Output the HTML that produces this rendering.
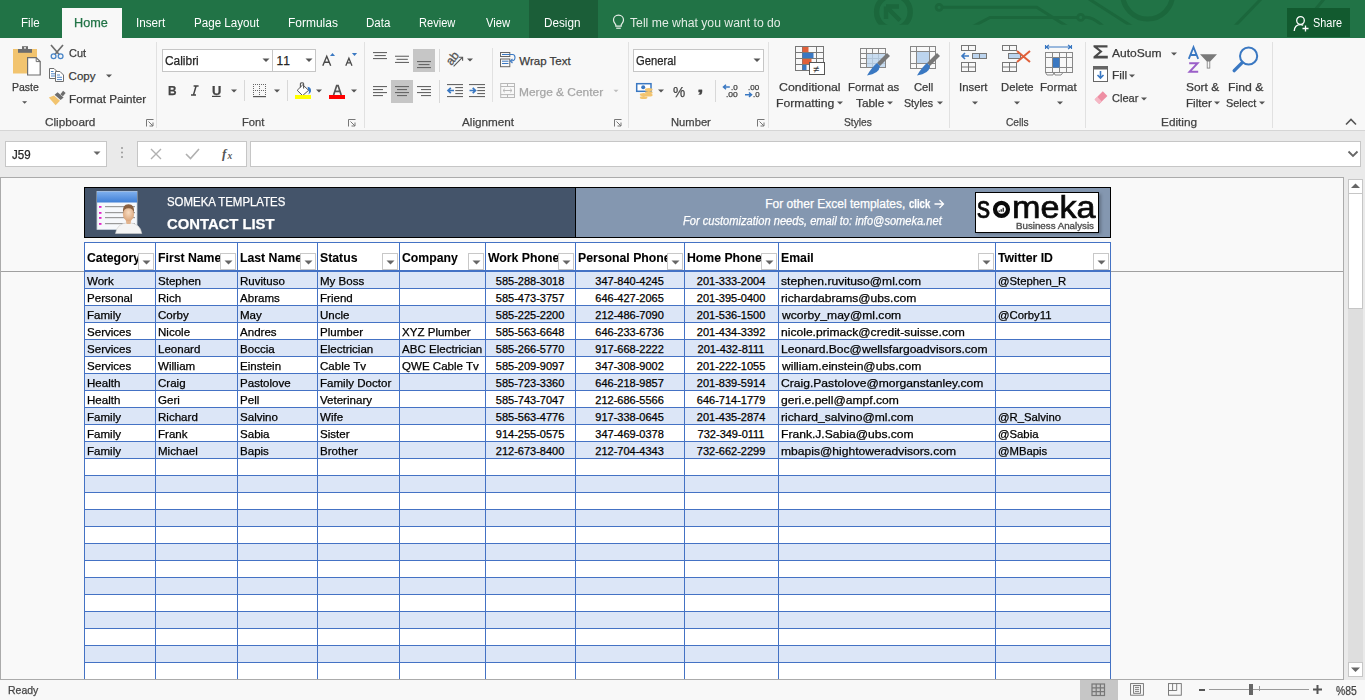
<!DOCTYPE html>
<html><head><meta charset="utf-8"><style>
html,body{margin:0;padding:0;width:1365px;height:700px;overflow:hidden;background:#f9f9f9;}
body{position:relative;font-family:"Liberation Sans",sans-serif;}
.t{position:absolute;line-height:1;white-space:pre;transform-origin:0 0;font-family:"Liberation Sans",sans-serif;-webkit-text-stroke:0.25px currentColor;}
.r{position:absolute;box-sizing:border-box;}
.s{position:absolute;overflow:visible;}
</style></head><body>
<div class="r" style="left:0px;top:0px;width:1365px;height:38px;background:#217346"></div>
<svg class="s" style="left:0px;top:0px;" width="1365" height="38" viewBox="0 0 1365 38">
      <defs><clipPath id="dclip"><rect x="0" y="0" width="1365" height="24.8"/></clipPath></defs>
      <g clip-path="url(#dclip)">
      <g fill="none" stroke="#1b673c" stroke-width="3">
        <path d="M942.5,7.3 L1036.7,7.3 L1068,27"/>
        <path d="M972,27 L990,17.4 L1077.2,17.4"/>
        <path d="M1084.2,17.4 Q1092,16 1104,27"/>
        <path d="M1089,-1 L1132,26.5"/>
        <path d="M1234,27 L1261,-1"/>
        <path d="M1310,16 L1324,-1"/>
      </g>
      <circle cx="893.4" cy="12" r="16.8" fill="none" stroke="#1b673c" stroke-width="5.4"/>
      <circle cx="1147.6" cy="-6" r="25" fill="none" stroke="#1b673c" stroke-width="5"/>
      <path d="M886,6.5 H899 M886,6.5 V19 M886,6.5 L900,20.5" fill="none" stroke="#1b673c" stroke-width="4.4"/>
      <g fill="none" stroke="#1b673c" stroke-width="2.8">
        <circle cx="939.1" cy="7.3" r="3"/>
        <circle cx="1080.7" cy="17.4" r="3"/>
      </g>
      </g>
    </svg>
<div class="r" style="left:62px;top:8px;width:60px;height:30px;background:#f8f8f8"></div>
<div class="r" style="left:529px;top:0px;width:69px;height:38px;background:#1b5e38"></div>
<div class="t" style="left:20.57px;top:17.00px;font-size:12.5px;color:#ffffff;transform:scaleX(0.9276);-webkit-text-stroke:0;">File</div>
<div class="t" style="left:136.16px;top:17.00px;font-size:12.5px;color:#ffffff;transform:scaleX(0.9354);-webkit-text-stroke:0;">Insert</div>
<div class="t" style="left:194.27px;top:17.00px;font-size:12.5px;color:#ffffff;transform:scaleX(0.9279);-webkit-text-stroke:0;">Page Layout</div>
<div class="t" style="left:288.24px;top:17.00px;font-size:12.5px;color:#ffffff;transform:scaleX(0.9578);-webkit-text-stroke:0;">Formulas</div>
<div class="t" style="left:366.18px;top:17.00px;font-size:12.5px;color:#ffffff;transform:scaleX(0.9233);-webkit-text-stroke:0;">Data</div>
<div class="t" style="left:419.31px;top:17.00px;font-size:12.5px;color:#ffffff;transform:scaleX(0.8863);-webkit-text-stroke:0;">Review</div>
<div class="t" style="left:485.80px;top:17.00px;font-size:12.5px;color:#ffffff;transform:scaleX(0.9016);-webkit-text-stroke:0;">View</div>
<div class="t" style="left:544.26px;top:17.00px;font-size:12.5px;color:#ffffff;transform:scaleX(0.9379);-webkit-text-stroke:0;">Design</div>
<div class="t" style="left:74.29px;top:17.00px;font-size:12.5px;color:#217346;transform:scaleX(1.0126);">Home</div>
<div class="t" style="left:630.20px;top:17.00px;font-size:12.5px;color:#e3ece5;transform:scaleX(0.9767);-webkit-text-stroke:0;">Tell me what you want to do</div>
<svg class="s" style="left:612px;top:14px;" width="13" height="16" viewBox="0 0 13 16"><path d="M6.5,1.2 C3.4,1.2 1.5,3.5 1.5,6 C1.5,8.2 3,9.4 3.8,10.8 L3.8,12.2 L9.2,12.2 L9.2,10.8 C10,9.4 11.5,8.2 11.5,6 C11.5,3.5 9.6,1.2 6.5,1.2 Z" fill="none" stroke="#e8efe9" stroke-width="1.2"/>
      <path d="M4.2,14.2 L8.8,14.2" stroke="#e8efe9" stroke-width="1.2"/></svg>
<div class="r" style="left:1287px;top:8px;width:63px;height:29px;background:#125a2f"></div>
<svg class="s" style="left:1293px;top:15px;" width="17" height="17" viewBox="0 0 17 17"><circle cx="7.5" cy="5.5" r="3.8" fill="none" stroke="#fff" stroke-width="1.3"/>
      <path d="M1.2,16 C1.5,11.5 4,9.6 7.5,9.6 C8.5,9.6 9.4,9.8 10.2,10.2" fill="none" stroke="#fff" stroke-width="1.3"/>
      <path d="M12.5,10.5 L12.5,16.5 M9.5,13.5 L15.5,13.5" stroke="#fff" stroke-width="1.3"/></svg>
<div class="t" style="left:1313.20px;top:17.00px;font-size:12.5px;color:#ffffff;transform:scaleX(0.8712);-webkit-text-stroke:0;">Share</div>
<div class="r" style="left:0px;top:38px;width:1365px;height:92px;background:#f8f8f8"></div>
<div class="r" style="left:0px;top:130px;width:1365px;height:1px;background:#d5d5d5"></div>
<div class="r" style="left:156px;top:42px;width:1px;height:86px;background:#e1e1e1"></div>
<div class="r" style="left:364px;top:42px;width:1px;height:86px;background:#e1e1e1"></div>
<div class="r" style="left:628px;top:42px;width:1px;height:86px;background:#e1e1e1"></div>
<div class="r" style="left:768px;top:42px;width:1px;height:86px;background:#e1e1e1"></div>
<div class="r" style="left:949px;top:42px;width:1px;height:86px;background:#e1e1e1"></div>
<div class="r" style="left:1085px;top:42px;width:1px;height:86px;background:#e1e1e1"></div>
<div class="r" style="left:1272px;top:42px;width:1px;height:86px;background:#e1e1e1"></div>
<div class="t" style="left:45.40px;top:117.00px;font-size:11.5px;color:#444444;transform:scaleX(1.0240);">Clipboard</div>
<div class="t" style="left:241.60px;top:117.00px;font-size:11.5px;color:#444444;transform:scaleX(0.9741);">Font</div>
<div class="t" style="left:462.00px;top:117.00px;font-size:11.5px;color:#444444;transform:scaleX(1.0184);">Alignment</div>
<div class="t" style="left:670.70px;top:117.00px;font-size:11.5px;color:#444444;transform:scaleX(0.9739);">Number</div>
<div class="t" style="left:844.30px;top:117.00px;font-size:11.5px;color:#444444;transform:scaleX(0.8902);">Styles</div>
<div class="t" style="left:1005.70px;top:117.00px;font-size:11.5px;color:#444444;transform:scaleX(0.8872);">Cells</div>
<div class="t" style="left:1160.80px;top:117.00px;font-size:11.5px;color:#444444;transform:scaleX(1.0268);">Editing</div>
<svg class="s" style="left:146px;top:119px;" width="8" height="8" viewBox="0 0 8 8"><path d="M0.5,7.5 L0.5,0.5 L7.5,0.5" fill="none" stroke="#777" stroke-width="1"/><path d="M2.5,2.5 L7,7 M7,3.5 L7,7 L3.5,7" fill="none" stroke="#777" stroke-width="1"/></svg>
<svg class="s" style="left:348px;top:119px;" width="8" height="8" viewBox="0 0 8 8"><path d="M0.5,7.5 L0.5,0.5 L7.5,0.5" fill="none" stroke="#777" stroke-width="1"/><path d="M2.5,2.5 L7,7 M7,3.5 L7,7 L3.5,7" fill="none" stroke="#777" stroke-width="1"/></svg>
<svg class="s" style="left:614px;top:119px;" width="8" height="8" viewBox="0 0 8 8"><path d="M0.5,7.5 L0.5,0.5 L7.5,0.5" fill="none" stroke="#777" stroke-width="1"/><path d="M2.5,2.5 L7,7 M7,3.5 L7,7 L3.5,7" fill="none" stroke="#777" stroke-width="1"/></svg>
<svg class="s" style="left:757px;top:119px;" width="8" height="8" viewBox="0 0 8 8"><path d="M0.5,7.5 L0.5,0.5 L7.5,0.5" fill="none" stroke="#777" stroke-width="1"/><path d="M2.5,2.5 L7,7 M7,3.5 L7,7 L3.5,7" fill="none" stroke="#777" stroke-width="1"/></svg>
<svg class="s" style="left:1345px;top:118px;" width="12" height="8" viewBox="0 0 12 8"><path d="M1,6.5 L6,1.5 L11,6.5" fill="none" stroke="#555" stroke-width="1.6"/></svg>
<svg class="s" style="left:0px;top:0px;" width="70" height="110" viewBox="0 0 70 110">
      <rect x="13" y="49" width="24" height="24.5" fill="#f2c46f"/>
      <path d="M18,49 H32 V52.8 H18 Z" fill="#6d6d6d"/>
      <path d="M22,46.2 H28 V49.5 H22 Z" fill="#6d6d6d"/>
      <rect x="24" y="47.2" width="2" height="1.4" fill="#f6f6f6"/>
      <path d="M27.6,57.6 H36.2 L40.2,61.6 V75 H27.6 Z" fill="#ffffff" stroke="#6d6d6d" stroke-width="1.2"/>
      <path d="M36.2,57.6 V61.6 H40.2" fill="none" stroke="#6d6d6d" stroke-width="1"/>
      <path d="M51,45 L60,55.5 M63,45 L54,55.5" stroke="#6d6d6d" stroke-width="1.7"/>
      <circle cx="53.6" cy="56.3" r="2.4" fill="#f6f6f6" stroke="#4a86c8" stroke-width="1.3"/>
      <circle cx="60.6" cy="56.3" r="2.4" fill="#f6f6f6" stroke="#4a86c8" stroke-width="1.3"/>
      <path d="M49.5,68.5 H54 L56.5,71 V78.5 H49.5 Z" fill="#fff" stroke="#6d6d6d" stroke-width="1"/>
      <path d="M51,71.5 H53.5 M51,73.8 H55 M51,76 H55" stroke="#3a78c2" stroke-width="0.9"/>
      <path d="M55.5,71.5 H60 L63.5,75 V81.5 H55.5 Z" fill="#fff" stroke="#6d6d6d" stroke-width="1"/>
      <path d="M57,75 H60 M57,77.3 H62 M57,79.6 H62" stroke="#3a78c2" stroke-width="0.9"/>
      <path d="M60.4,94.2 L63.1,90.8 L65.6,92.9 L62.9,96.3 Z" fill="#6d6d6d"/>
      <path d="M54.6,94.8 L57.6,92.2 L63.6,97.4 L60.6,100 Z" fill="#6d6d6d"/>
      <path d="M48.8,97.6 L54,95.6 L60,100.8 L55.6,105.2 Z" fill="#f2c46f"/>
    </svg>
<div class="t" style="left:12.00px;top:82.00px;font-size:11.5px;color:#3b3b3b;transform:scaleX(0.9134);">Paste</div>
<svg class="s" style="left:20px;top:100px;" width="10" height="5" viewBox="0 0 10 5"><polygon points="2.0999999999999996,1.2 7.1,1.2 4.6,3.7" fill="#555"/></svg>
<div class="t" style="left:68.60px;top:48.00px;font-size:11.5px;color:#3b3b3b;transform:scaleX(0.9518);">Cut</div>
<div class="t" style="left:68.60px;top:71.00px;font-size:11.5px;color:#3b3b3b;">Copy</div>
<svg class="s" style="left:105px;top:74px;" width="8" height="5" viewBox="0 0 8 5"><polygon points="1.0,0.5 7.0,0.5 4,3.5" fill="#555"/></svg>
<div class="t" style="left:68.60px;top:94.00px;font-size:11.5px;color:#3b3b3b;transform:scaleX(1.0154);">Format Painter</div>
<div class="r" style="left:162px;top:49px;width:111px;height:23px;background:#fff;border:1px solid #c6c6c6"></div>
<div class="r" style="left:272px;top:49px;width:44px;height:23px;background:#fff;border:1px solid #c6c6c6"></div>
<div class="t" style="left:165.30px;top:55.00px;font-size:12px;color:#262626;transform:scaleX(0.9927);">Calibri</div>
<div class="t" style="left:276.40px;top:55.00px;font-size:12px;color:#262626;">1</div>
<div class="t" style="left:283.20px;top:55.00px;font-size:12px;color:#262626;">1</div>
<svg class="s" style="left:261px;top:58px;" width="10" height="6" viewBox="0 0 10 6"><polygon points="1.5,0.5 8.5,0.5 5,4.0" fill="#555"/></svg>
<svg class="s" style="left:304px;top:58px;" width="10" height="6" viewBox="0 0 10 6"><polygon points="1.5,0.5 8.5,0.5 5,4.0" fill="#555"/></svg>
<svg class="s" style="left:0px;top:0px;" width="370" height="80" viewBox="0 0 370 80">
      <path d="M322.8,65.7 L326.75,56.3 L330.7,65.7 M324.3,62.3 H329.2" fill="none" stroke="#4a4a4a" stroke-width="1.4"/>
      <polygon points="330,55.9 335,55.9 332.5,52.9" fill="#3a78c2"/>
      <path d="M345.8,65.7 L348.9,58.3 L352,65.7 M347,62.9 H350.8" fill="none" stroke="#4a4a4a" stroke-width="1.3"/>
      <polygon points="351.9,53 357.1,53 354.5,56" fill="#3a78c2"/>
    </svg>
<div class="t" style="left:168.10px;top:84.00px;font-size:13px;color:#444;font-weight:bold;transform:scaleX(0.9111);">B</div>
<svg class="s" style="left:0px;top:0px;" width="370" height="110" viewBox="0 0 370 110">
      <path d="M193.6,86 H198.6 M191,94.9 H196 M196.1,86 L193.5,94.9" fill="none" stroke="#444" stroke-width="1.5"/>
      <rect x="212" y="95.8" width="8.6" height="1.2" fill="#444"/>
      <g fill="#666"><rect x="253" y="84" width="1" height="1"/><rect x="255" y="84" width="1" height="1"/><rect x="257" y="84" width="1" height="1"/><rect x="259" y="84" width="1" height="1"/><rect x="261" y="84" width="1" height="1"/><rect x="263" y="84" width="1" height="1"/><rect x="265" y="84" width="1" height="1"/>
      <rect x="253" y="90" width="1" height="1"/><rect x="255" y="90" width="1" height="1"/><rect x="257" y="90" width="1" height="1"/><rect x="259" y="90" width="1" height="1"/><rect x="261" y="90" width="1" height="1"/><rect x="263" y="90" width="1" height="1"/><rect x="265" y="90" width="1" height="1"/>
      <rect x="253" y="86" width="1" height="1"/><rect x="253" y="88" width="1" height="1"/><rect x="253" y="92" width="1" height="1"/><rect x="253" y="94" width="1" height="1"/>
      <rect x="259" y="86" width="1" height="1"/><rect x="259" y="88" width="1" height="1"/><rect x="259" y="92" width="1" height="1"/><rect x="259" y="94" width="1" height="1"/>
      <rect x="265" y="86" width="1" height="1"/><rect x="265" y="88" width="1" height="1"/><rect x="265" y="92" width="1" height="1"/><rect x="265" y="94" width="1" height="1"/></g>
      <rect x="253" y="96" width="13" height="1.2" fill="#555"/>
      <path d="M297.2,90.3 L302.8,84.8 L308.6,90.3 L302.6,95.6 Z" fill="#fff" stroke="#555" stroke-width="1"/>
      <path d="M300.4,87.4 V83.6 Q300.6,82.8 302,82.8 Q303.5,82.8 303.6,83.8 V88.6" fill="none" stroke="#555" stroke-width="1.1"/>
      <path d="M307.6,86.8 Q311.5,87.5 311,91.6 Q310.4,93.4 308.4,94.4 Q309.6,91 308,89.4 Z" fill="#3a78c2"/>
      <rect x="295" y="95" width="16" height="4" fill="#ffff00"/>
      <path d="M333.6,95 L336.7,85.6 H338.1 L341.2,95 M334.9,91.4 H339.9" fill="none" stroke="#555" stroke-width="1.7"/>
      <rect x="329" y="95" width="16" height="4" fill="#ff0000"/>
    </svg>
<div class="t" style="left:212.00px;top:85.00px;font-size:12px;color:#444;font-weight:bold;transform:scaleX(1.0750);">U</div>
<svg class="s" style="left:230px;top:89px;" width="8" height="5" viewBox="0 0 8 5"><polygon points="1.0,0.5 7.0,0.5 4,3.5" fill="#555"/></svg>
<div class="r" style="left:244px;top:80px;width:1px;height:21px;background:#d8d8d8"></div>
<svg class="s" style="left:273px;top:89px;" width="8" height="5" viewBox="0 0 8 5"><polygon points="1.0,0.5 7.0,0.5 4,3.5" fill="#555"/></svg>
<div class="r" style="left:287px;top:80px;width:1px;height:21px;background:#d8d8d8"></div>
<svg class="s" style="left:315px;top:89px;" width="8" height="5" viewBox="0 0 8 5"><polygon points="1.0,0.5 7.0,0.5 4,3.5" fill="#555"/></svg>
<svg class="s" style="left:350px;top:89px;" width="8" height="5" viewBox="0 0 8 5"><polygon points="1.0,0.5 7.0,0.5 4,3.5" fill="#555"/></svg>
<div class="r" style="left:413px;top:49px;width:22px;height:23px;background:#c6c6c6"></div>
<div class="r" style="left:391px;top:80px;width:22px;height:23px;background:#c6c6c6"></div>
<svg class="s" style="left:0px;top:0px;" width="630" height="110" viewBox="0 0 630 110"><rect x="373" y="52" width="14" height="1.1" fill="#666"/><rect x="374.5" y="55" width="11.300000000000011" height="1.1" fill="#666"/><rect x="373" y="58" width="14" height="1.1" fill="#666"/><rect x="395" y="55.7" width="14" height="1.1" fill="#666"/><rect x="396.5" y="58.8" width="11.300000000000011" height="1.1" fill="#666"/><rect x="395" y="61.9" width="14" height="1.1" fill="#666"/><rect x="417" y="61" width="14" height="1.1" fill="#666"/><rect x="418.5" y="64" width="11.0" height="1.1" fill="#666"/><rect x="417" y="67" width="14" height="1.1" fill="#666"/><rect x="373" y="86" width="14" height="1.1" fill="#666"/><rect x="373" y="89" width="10" height="1.1" fill="#666"/><rect x="373" y="92" width="14" height="1.1" fill="#666"/><rect x="373" y="95" width="10" height="1.1" fill="#666"/><rect x="395" y="86" width="14" height="1.1" fill="#666"/><rect x="397" y="89" width="10" height="1.1" fill="#666"/><rect x="395" y="92" width="14" height="1.1" fill="#666"/><rect x="397" y="95" width="10" height="1.1" fill="#666"/><rect x="417" y="86" width="14" height="1.1" fill="#666"/><rect x="421" y="89" width="10" height="1.1" fill="#666"/><rect x="417" y="92" width="14" height="1.1" fill="#666"/><rect x="421" y="95" width="10" height="1.1" fill="#666"/><rect x="447" y="84" width="16" height="1.1" fill="#666"/><rect x="455.3" y="87" width="7.699999999999989" height="1.1" fill="#666"/><rect x="455.3" y="90" width="7.699999999999989" height="1.1" fill="#666"/><rect x="455.3" y="93" width="7.699999999999989" height="1.1" fill="#666"/><rect x="447" y="96" width="16" height="1.1" fill="#666"/><path d="M448,90.5 H454 M450.8,87.8 L448,90.5 L450.8,93.2" fill="none" stroke="#3a78c2" stroke-width="1.7"/><rect x="469" y="84" width="16" height="1.1" fill="#666"/><rect x="477.3" y="87" width="7.699999999999989" height="1.1" fill="#666"/><rect x="477.3" y="90" width="7.699999999999989" height="1.1" fill="#666"/><rect x="477.3" y="93" width="7.699999999999989" height="1.1" fill="#666"/><rect x="469" y="96" width="16" height="1.1" fill="#666"/><path d="M469.5,90.5 H475.5 M472.7,87.8 L475.5,90.5 L472.7,93.2" fill="none" stroke="#3a78c2" stroke-width="1.7"/><text x="0" y="0" font-family="Liberation Sans" font-size="12" fill="#555" stroke="#555" stroke-width="0.3" transform="translate(451.5,66) rotate(-52)">ab</text><path d="M453.6,66.4 L462.4,57.4" stroke="#555" stroke-width="1.1"/><path d="M459,57.2 H462.6 V60.8" fill="none" stroke="#555" stroke-width="1.1"/><rect x="500.5" y="52.5" width="9.3" height="4" fill="none" stroke="#666" stroke-width="1"/><rect x="500.5" y="59" width="9.3" height="7.7" fill="none" stroke="#666" stroke-width="1"/><path d="M502,54.5 H512.5 Q515,54.5 515,57.5 Q515,61 511,61" fill="none" stroke="#3a78c2" stroke-width="1.1"/><path d="M512.5,59 L510.3,61 L512.5,63" fill="none" stroke="#3a78c2" stroke-width="1.1"/><path d="M502,61.2 H508.5 M502,63.5 H508.5" stroke="#3a78c2" stroke-width="1"/><rect x="500.7" y="83.5" width="13.8" height="14" fill="none" stroke="#b8b8b8" stroke-width="1"/><path d="M500.7,86.5 H514.5 M500.7,94.6 H514.5 M507.5,83.5 V86.5 M507.5,94.6 V97.5" stroke="#b8b8b8" stroke-width="1"/><path d="M503,90.5 H512 M504.8,88.8 L503,90.5 L504.8,92.2 M510.2,88.8 L512,90.5 L510.2,92.2" fill="none" stroke="#b8b8b8" stroke-width="1"/></svg>
<div class="r" style="left:439px;top:49px;width:1px;height:23px;background:#d8d8d8"></div>
<div class="r" style="left:439px;top:80px;width:1px;height:23px;background:#d8d8d8"></div>
<svg class="s" style="left:466px;top:58px;" width="8" height="5" viewBox="0 0 8 5"><polygon points="1.0,0.5 7.0,0.5 4,3.5" fill="#555"/></svg>
<div class="r" style="left:492px;top:48px;width:1px;height:54px;background:#e1e1e1"></div>
<div class="t" style="left:519.30px;top:56.00px;font-size:11.5px;color:#3b3b3b;">Wrap Text</div>
<div class="t" style="left:519.30px;top:87.00px;font-size:11.5px;color:#a6a6a6;transform:scaleX(1.0363);">Merge &amp; Center</div>
<svg class="s" style="left:612px;top:89px;" width="8" height="5" viewBox="0 0 8 5"><polygon points="1.5,0.8 6.5,0.8 4,3.3" fill="#bdbdbd"/></svg>
<div class="r" style="left:633px;top:49px;width:131px;height:23px;background:#fff;border:1px solid #c6c6c6"></div>
<div class="t" style="left:636.40px;top:55.00px;font-size:12px;color:#262626;transform:scaleX(0.9351);">General</div>
<svg class="s" style="left:752px;top:58px;" width="10" height="6" viewBox="0 0 10 6"><polygon points="1.5,0.5 8.5,0.5 5,4.0" fill="#555"/></svg>
<svg class="s" style="left:0px;top:0px;" width="770" height="110" viewBox="0 0 770 110">
      <rect x="636.7" y="83.7" width="14.3" height="7.6" fill="#fff" stroke="#3a78c2" stroke-width="1.5"/>
      <circle cx="643.2" cy="87.3" r="2" fill="#3a78c2"/>
      <ellipse cx="648.8" cy="89.6" rx="3.8" ry="1.5" fill="#f2c46f"/><ellipse cx="648.8" cy="92.4" rx="3.8" ry="1.5" fill="#f2c46f"/><ellipse cx="648.8" cy="95" rx="3.8" ry="1.5" fill="#f2c46f"/>
      <ellipse cx="643.6" cy="94.4" rx="3.8" ry="1.5" fill="#f2c46f"/><ellipse cx="643.6" cy="97.4" rx="3.8" ry="1.5" fill="#f2c46f"/>
      <path d="M723.5,87 H729.8 M726,84.8 L723.5,87 L726,89.2" fill="none" stroke="#3a78c2" stroke-width="1.5"/>
      <path d="M745,94.7 H751.5 M749,92.5 L751.5,94.7 L749,96.9" fill="none" stroke="#3a78c2" stroke-width="1.5"/>
    </svg>
<svg class="s" style="left:657px;top:89px;" width="8" height="5" viewBox="0 0 8 5"><polygon points="1.0,0.5 7.0,0.5 4,3.5" fill="#555"/></svg>
<div class="t" style="left:672.60px;top:85.00px;font-size:14.5px;color:#444;transform:scaleX(0.9462);">%</div>
<div class="t" style="left:697.20px;top:80.00px;font-size:14px;color:#444;font-weight:bold;transform:scaleX(1.7000);">,</div>
<div class="r" style="left:715px;top:80px;width:1px;height:22px;background:#d8d8d8"></div>
<div class="t" style="left:730.70px;top:84.00px;font-size:7.5px;color:#444;transform:scaleX(1.0684);">.0</div>
<div class="t" style="left:725.60px;top:91.00px;font-size:7.5px;color:#444;transform:scaleX(1.1312);">.00</div>
<div class="t" style="left:748.00px;top:84.00px;font-size:7.5px;color:#444;transform:scaleX(1.0727);">.00</div>
<div class="t" style="left:752.60px;top:91.00px;font-size:7.5px;color:#444;transform:scaleX(1.0520);">.0</div>
<svg class="s" style="left:794px;top:45px;" width="32" height="32" viewBox="0 0 32 32"><g fill="none" stroke="#777" stroke-width="1">
      <rect x="1.5" y="1.5" width="28" height="24"/><path d="M1.5,7.5 H29.5 M1.5,13.5 H29.5 M1.5,19.5 H29.5 M8.5,1.5 V25.5 M22.5,1.5 V25.5"/></g>
      <rect x="8.5" y="2" width="6" height="5" fill="#e0603a"/><rect x="8.5" y="8" width="11" height="5" fill="#3a78c2"/>
      <rect x="8.5" y="14" width="9" height="5" fill="#e0603a"/><rect x="8.5" y="20" width="4" height="5" fill="#3a78c2"/>
      <rect x="15.5" y="17.5" width="15" height="12" fill="#fff" stroke="#555" stroke-width="1"/>
      <text x="19" y="27.5" font-family="Liberation Sans" font-size="11" fill="#333">≠</text></svg>
<svg class="s" style="left:859px;top:47px;" width="32" height="30" viewBox="0 0 32 30"><g fill="none" stroke="#888" stroke-width="1">
      <rect x="1.5" y="1.5" width="25" height="19"/><path d="M1.5,6.5 H26.5 M1.5,11.5 H26.5 M1.5,16.5 H26.5 M7.5,1.5 V20.5 M13.5,1.5 V20.5 M19.5,1.5 V20.5"/></g>
      <rect x="8" y="7" width="18" height="13" fill="#bcd4ee" opacity="0.8"/>
      <path d="M28,6 L31,9 L21,19 L18,16 Z" fill="#777"/>
      <path d="M18,16 L21,19 Q20,27 8,28.5 Q13,20 18,16 Z" fill="#3a78c2"/></svg>
<svg class="s" style="left:909px;top:45px;" width="32" height="32" viewBox="0 0 32 32"><g fill="none" stroke="#888" stroke-width="1">
      <rect x="1.5" y="1.5" width="25" height="22"/><path d="M1.5,6.5 H26.5 M1.5,18.5 H26.5 M7.5,1.5 V23.5 M20.5,1.5 V23.5"/></g>
      <rect x="8" y="7" width="12" height="11" fill="#bcd4ee"/>
      <path d="M28,8 L31,11 L21,21 L18,18 Z" fill="#777"/>
      <path d="M18,18 L21,21 Q20,29 8,30.5 Q13,22 18,18 Z" fill="#3a78c2"/></svg>
<div class="t" style="left:778.60px;top:82.00px;font-size:11.5px;color:#3b3b3b;transform:scaleX(1.0705);">Conditional</div>
<div class="t" style="left:775.70px;top:98.00px;font-size:11.5px;color:#3b3b3b;transform:scaleX(1.0611);">Formatting</div>
<div class="t" style="left:847.60px;top:82.00px;font-size:11.5px;color:#3b3b3b;transform:scaleX(0.9882);">Format as</div>
<div class="t" style="left:856.40px;top:98.00px;font-size:11.5px;color:#3b3b3b;transform:scaleX(1.0297);">Table</div>
<div class="t" style="left:913.60px;top:82.00px;font-size:11.5px;color:#3b3b3b;transform:scaleX(0.9763);">Cell</div>
<div class="t" style="left:904.30px;top:98.00px;font-size:11.5px;color:#3b3b3b;transform:scaleX(0.9282);">Styles</div>
<div class="t" style="left:959.41px;top:82.00px;font-size:11.5px;color:#3b3b3b;transform:scaleX(0.9872);">Insert</div>
<div class="t" style="left:1000.70px;top:82.00px;font-size:11.5px;color:#3b3b3b;transform:scaleX(0.9803);">Delete</div>
<div class="t" style="left:1040.40px;top:82.00px;font-size:11.5px;color:#3b3b3b;transform:scaleX(1.0074);">Format</div>
<div class="t" style="left:1186.00px;top:82.00px;font-size:11.5px;color:#3b3b3b;transform:scaleX(1.0376);">Sort &amp;</div>
<div class="t" style="left:1186.00px;top:98.00px;font-size:11.5px;color:#3b3b3b;transform:scaleX(1.0107);">Filter</div>
<div class="t" style="left:1228.00px;top:82.00px;font-size:11.5px;color:#3b3b3b;transform:scaleX(1.0636);">Find &amp;</div>
<div class="t" style="left:1226.00px;top:98.00px;font-size:11.5px;color:#3b3b3b;transform:scaleX(0.9461);">Select</div>
<svg class="s" style="left:835.5px;top:101px;" width="8" height="5" viewBox="0 0 8 5"><polygon points="1.0,0.5 7.0,0.5 4,3.5" fill="#555"/></svg>
<svg class="s" style="left:885.5px;top:101px;" width="8" height="5" viewBox="0 0 8 5"><polygon points="1.0,0.5 7.0,0.5 4,3.5" fill="#555"/></svg>
<svg class="s" style="left:935.5px;top:101px;" width="8" height="5" viewBox="0 0 8 5"><polygon points="1.0,0.5 7.0,0.5 4,3.5" fill="#555"/></svg>
<svg class="s" style="left:970.5px;top:100.5px;" width="8" height="5" viewBox="0 0 8 5"><polygon points="1.0,0.5 7.0,0.5 4,3.5" fill="#555"/></svg>
<svg class="s" style="left:1012.5px;top:100.5px;" width="8" height="5" viewBox="0 0 8 5"><polygon points="1.0,0.5 7.0,0.5 4,3.5" fill="#555"/></svg>
<svg class="s" style="left:1055.5px;top:100.5px;" width="8" height="5" viewBox="0 0 8 5"><polygon points="1.0,0.5 7.0,0.5 4,3.5" fill="#555"/></svg>
<svg class="s" style="left:1213px;top:101px;" width="8" height="5" viewBox="0 0 8 5"><polygon points="1.0,0.5 7.0,0.5 4,3.5" fill="#555"/></svg>
<svg class="s" style="left:1258px;top:101px;" width="8" height="5" viewBox="0 0 8 5"><polygon points="1.0,0.5 7.0,0.5 4,3.5" fill="#555"/></svg>
<svg class="s" style="left:961px;top:45px;" width="28" height="28" viewBox="0 0 28 28"><g fill="none" stroke="#777" stroke-width="1">
      <rect x="0.5" y="0.5" width="14" height="5"/><path d="M7.5,0.5 V5.5"/>
      <rect x="0.5" y="17.5" width="14" height="9"/><path d="M7.5,17.5 V26.5 M0.5,22 H14.5"/></g><rect x="11.5" y="8.5" width="14" height="5" fill="#bcd4ee" stroke="#777"/>
      <path d="M18.5,8.5 V13.5" stroke="#777"/><path d="M1,11 H8 M4,8 L1,11 L4,14" fill="none" stroke="#3a78c2" stroke-width="1.6"/></svg>
<svg class="s" style="left:1002px;top:45px;" width="32" height="28" viewBox="0 0 32 28"><g fill="none" stroke="#777" stroke-width="1">
      <rect x="0.5" y="0.5" width="14" height="5"/><path d="M7.5,0.5 V5.5"/>
      <rect x="0.5" y="17.5" width="14" height="9"/><path d="M7.5,17.5 V26.5 M0.5,22 H14.5"/></g><rect x="6.5" y="8.5" width="12" height="5" fill="#bcd4ee" stroke="#777"/>
      <path d="M15,6 L28,17 M28,6 L15,17" stroke="#e0603a" stroke-width="2"/></svg>
<svg class="s" style="left:1044px;top:44px;" width="30" height="32" viewBox="0 0 30 32"><path d="M1.5,1 V5 M27.5,1 V5 M2,3 H27 M5,1 L2,3 L5,5 M24,1 L27,3 L24,5" fill="none" stroke="#3a78c2" stroke-width="1.1"/>
      <g fill="none" stroke="#888" stroke-width="1"><rect x="1.5" y="8.5" width="27" height="20"/>
      <path d="M1.5,13.5 H28.5 M1.5,23.5 H28.5 M8.5,8.5 V28.5 M15.5,8.5 V28.5 M22.5,8.5 V28.5"/>
      <path d="M1.5,28.5 L3,31 L9,31 L10,28.5 M10,28.5 L11,31 L17,31 L19,28.5"/></g>
      <rect x="9" y="14" width="6.5" height="9.5" fill="#3a78c2"/></svg>
<svg class="s" style="left:0px;top:0px;" width="1280" height="110" viewBox="0 0 1280 110"><path d="M1093.5,45.2 H1107.5 V47.6 H1097.6 L1102.6,51.6 L1097.6,55.8 H1107.8 V58.4 H1093.5 V56.4 L1099.4,51.6 L1093.5,46.9 Z" fill="#4a4a4a"/></svg>
<div class="t" style="left:1112.40px;top:48.00px;font-size:11.5px;color:#3b3b3b;transform:scaleX(1.0487);">AutoSum</div>
<svg class="s" style="left:1170px;top:52px;" width="8" height="5" viewBox="0 0 8 5"><polygon points="1.0,0.5 7.0,0.5 4,3.5" fill="#555"/></svg>
<svg class="s" style="left:1093px;top:66px;" width="16" height="17" viewBox="0 0 16 17"><rect x="0.5" y="0.5" width="14" height="15" fill="#fff" stroke="#666"/><rect x="0.5" y="0.5" width="14" height="3" fill="#666"/>
      <path d="M7.5,5 V12 M4.5,9 L7.5,12 L10.5,9" fill="none" stroke="#3a78c2" stroke-width="1.6"/></svg>
<div class="t" style="left:1112.40px;top:70.00px;font-size:11.5px;color:#3b3b3b;transform:scaleX(1.0329);">Fill</div>
<svg class="s" style="left:1128px;top:74px;" width="8" height="5" viewBox="0 0 8 5"><polygon points="1.0,0.5 7.0,0.5 4,3.5" fill="#555"/></svg>
<svg class="s" style="left:0px;top:0px;" width="1280" height="110" viewBox="0 0 1280 110"><path d="M1094.6,99.5 L1102.8,91.3 L1107.4,95.9 L1099.2,104.1 Z" fill="#ee8ea3"/><path d="M1094.6,99.5 L1097.3,96.8 L1101.9,101.4 L1099.2,104.1 Z" fill="#f5b8c5"/></svg>
<div class="t" style="left:1112.40px;top:93.00px;font-size:11.5px;color:#3b3b3b;transform:scaleX(0.9620);">Clear</div>
<svg class="s" style="left:1140px;top:97px;" width="8" height="5" viewBox="0 0 8 5"><polygon points="1.0,0.5 7.0,0.5 4,3.5" fill="#555"/></svg>
<svg class="s" style="left:0px;top:0px;" width="1280" height="110" viewBox="0 0 1280 110"><path d="M1188.8,58.8 L1193.5,47.2 L1198.2,58.8 M1190.4,55 H1196.6" fill="none" stroke="#3a78c2" stroke-width="1.8"/>
      <path d="M1189.2,63.2 H1197.6 L1189.5,71.8 H1198.2" fill="none" stroke="#9b5fc8" stroke-width="1.9"/>
      <path d="M1200,54.3 H1217 L1210.2,61.5 V68.5 H1206.8 V61.5 Z" fill="#7a7a7a"/><rect x="1207.6" y="61.5" width="1.8" height="6.2" fill="#f8f8f8"/></svg>
<svg class="s" style="left:0px;top:0px;" width="1280" height="110" viewBox="0 0 1280 110"><circle cx="1248.6" cy="56" r="8.6" fill="none" stroke="#3a78c2" stroke-width="2"/>
      <path d="M1242.2,62.6 L1234.2,70.6" stroke="#3a78c2" stroke-width="3.4" stroke-linecap="round"/></svg>
<div class="r" style="left:0px;top:131px;width:1365px;height:46px;background:#eaeaea"></div>
<div class="r" style="left:5px;top:141px;width:102px;height:26px;background:#fff;border:1px solid #c6c6c6"></div>
<div class="t" style="left:11.90px;top:149.00px;font-size:12px;color:#262626;transform:scaleX(0.9607);">J59</div>
<svg class="s" style="left:92px;top:151px;" width="10" height="6" viewBox="0 0 10 6"><polygon points="1.5,0.5 8.5,0.5 5,4.0" fill="#666"/></svg>
<svg class="s" style="left:120px;top:146px;" width="4" height="14" viewBox="0 0 4 14"><circle cx="2" cy="2" r="1" fill="#999"/><circle cx="2" cy="6.5" r="1" fill="#999"/><circle cx="2" cy="11" r="1" fill="#999"/></svg>
<div class="r" style="left:137px;top:141px;width:110px;height:26px;background:#fff;border:1px solid #c6c6c6"></div>
<svg class="s" style="left:150px;top:148px;" width="12" height="12" viewBox="0 0 12 12"><path d="M1,1 L11,11 M11,1 L1,11" stroke="#b0b0b0" stroke-width="1.4"/></svg>
<svg class="s" style="left:185px;top:147px;" width="15" height="13" viewBox="0 0 15 13"><path d="M1,7 L5.5,11.5 L14,2" fill="none" stroke="#b0b0b0" stroke-width="1.6"/></svg>
<svg class="s" style="left:220px;top:146px;" width="16" height="16" viewBox="0 0 16 16"><text x="2" y="12" font-family="Liberation Serif" font-style="italic" font-weight="bold" font-size="13" fill="#555">f</text><text x="7.5" y="12.5" font-family="Liberation Serif" font-style="italic" font-weight="bold" font-size="9.5" fill="#555">x</text></svg>
<div class="r" style="left:250px;top:141px;width:1111px;height:26px;background:#fff;border:1px solid #c6c6c6"></div>
<svg class="s" style="left:1347px;top:150px;" width="12" height="8" viewBox="0 0 12 8"><path d="M1.5,1.5 L6,6 L10.5,1.5" fill="none" stroke="#666" stroke-width="1.8"/></svg>
<div class="r" style="left:0px;top:177px;width:1365px;height:503px;background:#eaeaea"></div>
<div class="r" style="left:0px;top:177px;width:1344px;height:503px;background:#f9f9f9;border:1px solid #ababab"></div>
<div class="r" style="left:1px;top:271px;width:1342px;height:1px;background:#a0a0a0"></div>
<div class="r" style="left:1348px;top:179px;width:15px;height:498px;background:#dedede"></div>
<div class="r" style="left:1348px;top:179px;width:15px;height:15px;background:#fff;border:1px solid #c6c6c6"></div>
<svg class="s" style="left:1350px;top:183px;" width="11" height="6" viewBox="0 0 11 6"><polygon points="1,5 10,5 5.5,0.5" fill="#666"/></svg>
<div class="r" style="left:1348px;top:193px;width:15px;height:116px;background:#fff;border:1px solid #c6c6c6"></div>
<div class="r" style="left:1348px;top:662px;width:15px;height:15px;background:#fff;border:1px solid #c6c6c6"></div>
<svg class="s" style="left:1350px;top:667px;" width="11" height="6" viewBox="0 0 11 6"><polygon points="1,0.5 10,0.5 5.5,5" fill="#666"/></svg>
<div class="r" style="left:84px;top:187px;width:1027px;height:51px;background:#8497b0;border:1px solid #000"></div>
<div class="r" style="left:85px;top:188px;width:491px;height:49px;background:#44546a;border-right:1px solid #000"></div>
<div class="t" style="left:167.00px;top:196.00px;font-size:12px;color:#ffffff;transform:scaleX(0.9526);">SOMEKA TEMPLATES</div>
<div class="t" style="left:167.00px;top:217.00px;font-size:14.5px;color:#ffffff;font-weight:bold;transform:scaleX(1.0219);">CONTACT LIST</div>
<svg class="s" style="left:96px;top:191px;" width="46" height="43" viewBox="0 0 46 43">
      <defs><linearGradient id="hb" x1="0" y1="0" x2="0" y2="1"><stop offset="0" stop-color="#7fb0ee"/><stop offset="1" stop-color="#3f7fd6"/></linearGradient>
      <radialGradient id="face" cx="0.5" cy="0.4" r="0.6"><stop offset="0" stop-color="#f9dcc0"/><stop offset="1" stop-color="#d9a47a"/></radialGradient></defs>
      <rect x="1" y="0.5" width="40" height="38" fill="#f6f8fb" stroke="#c9d2dc" stroke-width="0.8"/>
      <rect x="1" y="0.5" width="40" height="11" fill="url(#hb)"/>
      <g fill="#e020c8"><rect x="3" y="15" width="2.5" height="1.8"/><rect x="3" y="21" width="2.5" height="1.8"/><rect x="3" y="26" width="2.5" height="1.8"/><rect x="3" y="32" width="2.5" height="1.8"/></g>
      <g fill="#9a9a9a"><rect x="9" y="15" width="30" height="1.2"/><rect x="9" y="21" width="30" height="1.2"/><rect x="9" y="26" width="30" height="1.2"/><rect x="9" y="32" width="30" height="1.2"/></g>
      <path d="M19.5,42.5 Q20.5,32.5 32.5,31.5 Q44.5,32.5 45.8,42.5 Z" fill="#f4f4f4" stroke="#cfcfcf" stroke-width="0.6"/>
      <path d="M29.5,28 L35.5,28 L34.5,33 L30.5,33 Z" fill="#e2b48e"/>
      <ellipse cx="32.5" cy="23" rx="5.6" ry="7.2" fill="url(#face)"/>
      <path d="M26.9,22.5 Q26,13.2 32.5,13.2 Q39,13.2 38.1,22.5 Q37.2,17.2 32.5,17.2 Q27.8,17.2 26.9,22.5 Z" fill="#8a6040"/>
    </svg>
<div class="t" style="left:765.20px;top:198.00px;font-size:12px;color:#ffffff;">For other Excel templates,</div>
<div class="t" style="left:909.40px;top:198.00px;font-size:12px;color:#ffffff;font-weight:bold;transform:scaleX(0.7958);">click</div>
<svg class="s" style="left:934px;top:199px;" width="11" height="10" viewBox="0 0 11 10"><path d="M0.5,5 H9.5 M5.5,1 L9.5,5 L5.5,9" fill="none" stroke="#fff" stroke-width="1.3"/></svg>
<div class="t" style="left:683.20px;top:215.00px;font-size:12px;color:#ffffff;font-style:italic;transform:scaleX(0.9254);">For customization needs, email to: info@someka.net</div>
<div class="r" style="left:977px;top:194px;width:124px;height:40px;background:rgba(0,0,0,0.25);filter:blur(1.5px)"></div>
<div class="r" style="left:975px;top:192px;width:124px;height:41px;background:#fff;border:1.3px solid #000"></div>
<div class="t" style="left:977.30px;top:192.00px;font-size:31px;color:#0a0a0a;transform:scaleX(0.8467);-webkit-text-stroke:0.7px #0a0a0a;">s</div>
<svg class="s" style="left:990px;top:198px;" width="22" height="22" viewBox="0 0 22 22"><circle cx="11.5" cy="11.3" r="6.5" fill="none" stroke="#0a0a0a" stroke-width="4.2"/><path d="M9.2,13.8 V12.6 M11.2,13.8 V11.2 M13.2,13.8 V9.8" stroke="#0a0a0a" stroke-width="1.2"/></svg>
<div class="t" style="left:1011.60px;top:192.00px;font-size:31px;color:#0a0a0a;transform:scaleX(1.1024);-webkit-text-stroke:0.7px #0a0a0a;">meka</div>
<div class="t" style="left:1016.00px;top:222.00px;font-size:9px;color:#505050;transform:scaleX(1.0817);-webkit-text-stroke:0.35px #505050;">Business Analysis</div>
<div class="r" style="left:84px;top:242px;width:1027px;height:29px;background:#fff"></div>
<div class="r" style="left:84px;top:271px;width:1027px;height:1px;background:#4472c4"></div>
<div class="r" style="left:84px;top:272px;width:1027px;height:16px;background:#dce6f7"></div>
<div class="r" style="left:84px;top:288px;width:1027px;height:1px;background:#4472c4"></div>
<div class="r" style="left:84px;top:289px;width:1027px;height:16px;background:#ffffff"></div>
<div class="r" style="left:84px;top:305px;width:1027px;height:1px;background:#4472c4"></div>
<div class="r" style="left:84px;top:306px;width:1027px;height:16px;background:#dce6f7"></div>
<div class="r" style="left:84px;top:322px;width:1027px;height:1px;background:#4472c4"></div>
<div class="r" style="left:84px;top:323px;width:1027px;height:16px;background:#ffffff"></div>
<div class="r" style="left:84px;top:339px;width:1027px;height:1px;background:#4472c4"></div>
<div class="r" style="left:84px;top:340px;width:1027px;height:16px;background:#dce6f7"></div>
<div class="r" style="left:84px;top:356px;width:1027px;height:1px;background:#4472c4"></div>
<div class="r" style="left:84px;top:357px;width:1027px;height:16px;background:#ffffff"></div>
<div class="r" style="left:84px;top:373px;width:1027px;height:1px;background:#4472c4"></div>
<div class="r" style="left:84px;top:374px;width:1027px;height:16px;background:#dce6f7"></div>
<div class="r" style="left:84px;top:390px;width:1027px;height:1px;background:#4472c4"></div>
<div class="r" style="left:84px;top:391px;width:1027px;height:16px;background:#ffffff"></div>
<div class="r" style="left:84px;top:407px;width:1027px;height:1px;background:#4472c4"></div>
<div class="r" style="left:84px;top:408px;width:1027px;height:16px;background:#dce6f7"></div>
<div class="r" style="left:84px;top:424px;width:1027px;height:1px;background:#4472c4"></div>
<div class="r" style="left:84px;top:425px;width:1027px;height:16px;background:#ffffff"></div>
<div class="r" style="left:84px;top:441px;width:1027px;height:1px;background:#4472c4"></div>
<div class="r" style="left:84px;top:442px;width:1027px;height:16px;background:#dce6f7"></div>
<div class="r" style="left:84px;top:458px;width:1027px;height:1px;background:#4472c4"></div>
<div class="r" style="left:84px;top:459px;width:1027px;height:16px;background:#ffffff"></div>
<div class="r" style="left:84px;top:475px;width:1027px;height:1px;background:#4472c4"></div>
<div class="r" style="left:84px;top:476px;width:1027px;height:16px;background:#dce6f7"></div>
<div class="r" style="left:84px;top:492px;width:1027px;height:1px;background:#4472c4"></div>
<div class="r" style="left:84px;top:493px;width:1027px;height:16px;background:#ffffff"></div>
<div class="r" style="left:84px;top:509px;width:1027px;height:1px;background:#4472c4"></div>
<div class="r" style="left:84px;top:510px;width:1027px;height:16px;background:#dce6f7"></div>
<div class="r" style="left:84px;top:526px;width:1027px;height:1px;background:#4472c4"></div>
<div class="r" style="left:84px;top:527px;width:1027px;height:16px;background:#ffffff"></div>
<div class="r" style="left:84px;top:543px;width:1027px;height:1px;background:#4472c4"></div>
<div class="r" style="left:84px;top:544px;width:1027px;height:16px;background:#dce6f7"></div>
<div class="r" style="left:84px;top:560px;width:1027px;height:1px;background:#4472c4"></div>
<div class="r" style="left:84px;top:561px;width:1027px;height:16px;background:#ffffff"></div>
<div class="r" style="left:84px;top:577px;width:1027px;height:1px;background:#4472c4"></div>
<div class="r" style="left:84px;top:578px;width:1027px;height:16px;background:#dce6f7"></div>
<div class="r" style="left:84px;top:594px;width:1027px;height:1px;background:#4472c4"></div>
<div class="r" style="left:84px;top:595px;width:1027px;height:16px;background:#ffffff"></div>
<div class="r" style="left:84px;top:611px;width:1027px;height:1px;background:#4472c4"></div>
<div class="r" style="left:84px;top:612px;width:1027px;height:16px;background:#dce6f7"></div>
<div class="r" style="left:84px;top:628px;width:1027px;height:1px;background:#4472c4"></div>
<div class="r" style="left:84px;top:629px;width:1027px;height:16px;background:#ffffff"></div>
<div class="r" style="left:84px;top:645px;width:1027px;height:1px;background:#4472c4"></div>
<div class="r" style="left:84px;top:646px;width:1027px;height:16px;background:#dce6f7"></div>
<div class="r" style="left:84px;top:662px;width:1027px;height:1px;background:#4472c4"></div>
<div class="r" style="left:84px;top:663px;width:1027px;height:16px;background:#ffffff"></div>
<div class="r" style="left:84px;top:679px;width:1027px;height:1px;background:#4472c4"></div>
<div class="r" style="left:84px;top:242px;width:1027px;height:1px;background:#4472c4"></div>
<div class="r" style="left:84px;top:270px;width:1027px;height:1px;background:#4472c4"></div>
<div class="r" style="left:84px;top:242px;width:1px;height:437px;background:#4472c4"></div>
<div class="r" style="left:155px;top:242px;width:1px;height:437px;background:#4472c4"></div>
<div class="r" style="left:237px;top:242px;width:1px;height:437px;background:#4472c4"></div>
<div class="r" style="left:317px;top:242px;width:1px;height:437px;background:#4472c4"></div>
<div class="r" style="left:399px;top:242px;width:1px;height:437px;background:#4472c4"></div>
<div class="r" style="left:485px;top:242px;width:1px;height:437px;background:#4472c4"></div>
<div class="r" style="left:575px;top:242px;width:1px;height:437px;background:#4472c4"></div>
<div class="r" style="left:684px;top:242px;width:1px;height:437px;background:#4472c4"></div>
<div class="r" style="left:778px;top:242px;width:1px;height:437px;background:#4472c4"></div>
<div class="r" style="left:995px;top:242px;width:1px;height:437px;background:#4472c4"></div>
<div class="r" style="left:1110px;top:242px;width:1px;height:437px;background:#4472c4"></div>
<div class="t" style="left:87.00px;top:252.00px;font-size:12.5px;color:#000;font-weight:bold;transform:scaleX(0.9800);-webkit-text-stroke:0.1px #000;">Category</div>
<div class="r" style="left:138px;top:253px;width:16px;height:17px;background:#fff;border:1px solid #c8c8c8"></div>
<svg class="s" style="left:142px;top:260px;" width="9" height="5" viewBox="0 0 9 5"><polygon points="0.5,0.5 8.5,0.5 4.5,4.5" fill="#666"/></svg>
<div class="t" style="left:158.00px;top:252.00px;font-size:12.5px;color:#000;font-weight:bold;transform:scaleX(0.9800);-webkit-text-stroke:0.1px #000;">First Name</div>
<div class="r" style="left:220px;top:253px;width:16px;height:17px;background:#fff;border:1px solid #c8c8c8"></div>
<svg class="s" style="left:224px;top:260px;" width="9" height="5" viewBox="0 0 9 5"><polygon points="0.5,0.5 8.5,0.5 4.5,4.5" fill="#666"/></svg>
<div class="t" style="left:240.00px;top:252.00px;font-size:12.5px;color:#000;font-weight:bold;transform:scaleX(0.9800);-webkit-text-stroke:0.1px #000;">Last Name</div>
<div class="r" style="left:300px;top:253px;width:16px;height:17px;background:#fff;border:1px solid #c8c8c8"></div>
<svg class="s" style="left:304px;top:260px;" width="9" height="5" viewBox="0 0 9 5"><polygon points="0.5,0.5 8.5,0.5 4.5,4.5" fill="#666"/></svg>
<div class="t" style="left:320.00px;top:252.00px;font-size:12.5px;color:#000;font-weight:bold;transform:scaleX(0.9800);-webkit-text-stroke:0.1px #000;">Status</div>
<div class="r" style="left:382px;top:253px;width:16px;height:17px;background:#fff;border:1px solid #c8c8c8"></div>
<svg class="s" style="left:386px;top:260px;" width="9" height="5" viewBox="0 0 9 5"><polygon points="0.5,0.5 8.5,0.5 4.5,4.5" fill="#666"/></svg>
<div class="t" style="left:402.00px;top:252.00px;font-size:12.5px;color:#000;font-weight:bold;transform:scaleX(0.9800);-webkit-text-stroke:0.1px #000;">Company</div>
<div class="r" style="left:468px;top:253px;width:16px;height:17px;background:#fff;border:1px solid #c8c8c8"></div>
<svg class="s" style="left:472px;top:260px;" width="9" height="5" viewBox="0 0 9 5"><polygon points="0.5,0.5 8.5,0.5 4.5,4.5" fill="#666"/></svg>
<div class="t" style="left:488.00px;top:252.00px;font-size:12.5px;color:#000;font-weight:bold;transform:scaleX(0.9800);-webkit-text-stroke:0.1px #000;">Work Phone</div>
<div class="r" style="left:558px;top:253px;width:16px;height:17px;background:#fff;border:1px solid #c8c8c8"></div>
<svg class="s" style="left:562px;top:260px;" width="9" height="5" viewBox="0 0 9 5"><polygon points="0.5,0.5 8.5,0.5 4.5,4.5" fill="#666"/></svg>
<div class="t" style="left:578.00px;top:252.00px;font-size:12.5px;color:#000;font-weight:bold;transform:scaleX(0.9800);-webkit-text-stroke:0.1px #000;">Personal Phone</div>
<div class="r" style="left:667px;top:253px;width:16px;height:17px;background:#fff;border:1px solid #c8c8c8"></div>
<svg class="s" style="left:671px;top:260px;" width="9" height="5" viewBox="0 0 9 5"><polygon points="0.5,0.5 8.5,0.5 4.5,4.5" fill="#666"/></svg>
<div class="t" style="left:687.00px;top:252.00px;font-size:12.5px;color:#000;font-weight:bold;transform:scaleX(0.9800);-webkit-text-stroke:0.1px #000;">Home Phone</div>
<div class="r" style="left:761px;top:253px;width:16px;height:17px;background:#fff;border:1px solid #c8c8c8"></div>
<svg class="s" style="left:765px;top:260px;" width="9" height="5" viewBox="0 0 9 5"><polygon points="0.5,0.5 8.5,0.5 4.5,4.5" fill="#666"/></svg>
<div class="t" style="left:781.00px;top:252.00px;font-size:12.5px;color:#000;font-weight:bold;transform:scaleX(0.9800);-webkit-text-stroke:0.1px #000;">Email</div>
<div class="r" style="left:978px;top:253px;width:16px;height:17px;background:#fff;border:1px solid #c8c8c8"></div>
<svg class="s" style="left:982px;top:260px;" width="9" height="5" viewBox="0 0 9 5"><polygon points="0.5,0.5 8.5,0.5 4.5,4.5" fill="#666"/></svg>
<div class="t" style="left:998.00px;top:252.00px;font-size:12.5px;color:#000;font-weight:bold;transform:scaleX(0.9800);-webkit-text-stroke:0.1px #000;">Twitter ID</div>
<div class="r" style="left:1093px;top:253px;width:16px;height:17px;background:#fff;border:1px solid #c8c8c8"></div>
<svg class="s" style="left:1097px;top:260px;" width="9" height="5" viewBox="0 0 9 5"><polygon points="0.5,0.5 8.5,0.5 4.5,4.5" fill="#666"/></svg>
<div class="t" style="left:86.50px;top:276.00px;font-size:11px;color:#000;transform:scaleX(1.0500);">Work</div>
<div class="t" style="left:157.50px;top:276.00px;font-size:11px;color:#000;transform:scaleX(1.0500);">Stephen</div>
<div class="t" style="left:239.50px;top:276.00px;font-size:11px;color:#000;transform:scaleX(1.0500);">Ruvituso</div>
<div class="t" style="left:319.50px;top:276.00px;font-size:11px;color:#000;transform:scaleX(1.0500);">My Boss</div>
<div class="t" style="left:495.81px;top:276.00px;font-size:11px;color:#000;">585-288-3018</div>
<div class="t" style="left:595.31px;top:276.00px;font-size:11px;color:#000;">347-840-4245</div>
<div class="t" style="left:696.81px;top:276.00px;font-size:11px;color:#000;">201-333-2004</div>
<div class="t" style="left:780.50px;top:276.00px;font-size:11px;color:#000;transform:scaleX(1.1000);">stephen.ruvituso@ml.com</div>
<div class="t" style="left:997.50px;top:276.00px;font-size:11px;color:#000;transform:scaleX(1.0300);">@Stephen_R</div>
<div class="t" style="left:86.50px;top:293.00px;font-size:11px;color:#000;transform:scaleX(1.0500);">Personal</div>
<div class="t" style="left:157.50px;top:293.00px;font-size:11px;color:#000;transform:scaleX(1.0500);">Rich</div>
<div class="t" style="left:239.50px;top:293.00px;font-size:11px;color:#000;transform:scaleX(1.0500);">Abrams</div>
<div class="t" style="left:319.50px;top:293.00px;font-size:11px;color:#000;transform:scaleX(1.0500);">Friend</div>
<div class="t" style="left:495.81px;top:293.00px;font-size:11px;color:#000;">585-473-3757</div>
<div class="t" style="left:595.31px;top:293.00px;font-size:11px;color:#000;">646-427-2065</div>
<div class="t" style="left:696.81px;top:293.00px;font-size:11px;color:#000;">201-395-0400</div>
<div class="t" style="left:780.50px;top:293.00px;font-size:11px;color:#000;transform:scaleX(1.1000);">richardabrams@ubs.com</div>
<div class="t" style="left:86.50px;top:310.00px;font-size:11px;color:#000;transform:scaleX(1.0500);">Family</div>
<div class="t" style="left:157.50px;top:310.00px;font-size:11px;color:#000;transform:scaleX(1.0500);">Corby</div>
<div class="t" style="left:239.50px;top:310.00px;font-size:11px;color:#000;transform:scaleX(1.0500);">May</div>
<div class="t" style="left:319.50px;top:310.00px;font-size:11px;color:#000;transform:scaleX(1.0500);">Uncle</div>
<div class="t" style="left:495.81px;top:310.00px;font-size:11px;color:#000;">585-225-2200</div>
<div class="t" style="left:595.31px;top:310.00px;font-size:11px;color:#000;">212-486-7090</div>
<div class="t" style="left:696.81px;top:310.00px;font-size:11px;color:#000;">201-536-1500</div>
<div class="t" style="left:781.60px;top:310.00px;font-size:11px;color:#000;transform:scaleX(1.1000);">wcorby_may@ml.com</div>
<div class="t" style="left:997.50px;top:310.00px;font-size:11px;color:#000;transform:scaleX(1.0300);">@Corby11</div>
<div class="t" style="left:86.50px;top:327.00px;font-size:11px;color:#000;transform:scaleX(1.0500);">Services</div>
<div class="t" style="left:157.50px;top:327.00px;font-size:11px;color:#000;transform:scaleX(1.0500);">Nicole</div>
<div class="t" style="left:239.50px;top:327.00px;font-size:11px;color:#000;transform:scaleX(1.0500);">Andres</div>
<div class="t" style="left:319.50px;top:327.00px;font-size:11px;color:#000;transform:scaleX(1.0500);">Plumber</div>
<div class="t" style="left:401.50px;top:327.00px;font-size:11px;color:#000;transform:scaleX(1.0500);">XYZ Plumber</div>
<div class="t" style="left:495.81px;top:327.00px;font-size:11px;color:#000;">585-563-6648</div>
<div class="t" style="left:595.31px;top:327.00px;font-size:11px;color:#000;">646-233-6736</div>
<div class="t" style="left:696.81px;top:327.00px;font-size:11px;color:#000;">201-434-3392</div>
<div class="t" style="left:780.50px;top:327.00px;font-size:11px;color:#000;transform:scaleX(1.1000);">nicole.primack@credit-suisse.com</div>
<div class="t" style="left:86.50px;top:344.00px;font-size:11px;color:#000;transform:scaleX(1.0500);">Services</div>
<div class="t" style="left:157.50px;top:344.00px;font-size:11px;color:#000;transform:scaleX(1.0500);">Leonard</div>
<div class="t" style="left:239.50px;top:344.00px;font-size:11px;color:#000;transform:scaleX(1.0500);">Boccia</div>
<div class="t" style="left:319.50px;top:344.00px;font-size:11px;color:#000;transform:scaleX(1.0500);">Electrician</div>
<div class="t" style="left:401.50px;top:344.00px;font-size:11px;color:#000;transform:scaleX(1.0500);">ABC Electrician</div>
<div class="t" style="left:495.81px;top:344.00px;font-size:11px;color:#000;">585-266-5770</div>
<div class="t" style="left:595.31px;top:344.00px;font-size:11px;color:#000;">917-668-2222</div>
<div class="t" style="left:697.62px;top:344.00px;font-size:11px;color:#000;">201-432-8111</div>
<div class="t" style="left:780.50px;top:344.00px;font-size:11px;color:#000;transform:scaleX(1.1000);">Leonard.Boc@wellsfargoadvisors.com</div>
<div class="t" style="left:86.50px;top:361.00px;font-size:11px;color:#000;transform:scaleX(1.0500);">Services</div>
<div class="t" style="left:157.50px;top:361.00px;font-size:11px;color:#000;transform:scaleX(1.0500);">William</div>
<div class="t" style="left:239.50px;top:361.00px;font-size:11px;color:#000;transform:scaleX(1.0500);">Einstein</div>
<div class="t" style="left:319.50px;top:361.00px;font-size:11px;color:#000;transform:scaleX(1.0500);">Cable Tv</div>
<div class="t" style="left:401.50px;top:361.00px;font-size:11px;color:#000;transform:scaleX(1.0500);">QWE Cable Tv</div>
<div class="t" style="left:495.81px;top:361.00px;font-size:11px;color:#000;">585-209-9097</div>
<div class="t" style="left:595.31px;top:361.00px;font-size:11px;color:#000;">347-308-9002</div>
<div class="t" style="left:696.81px;top:361.00px;font-size:11px;color:#000;">201-222-1055</div>
<div class="t" style="left:781.60px;top:361.00px;font-size:11px;color:#000;transform:scaleX(1.1000);">william.einstein@ubs.com</div>
<div class="t" style="left:86.50px;top:378.00px;font-size:11px;color:#000;transform:scaleX(1.0500);">Health</div>
<div class="t" style="left:157.50px;top:378.00px;font-size:11px;color:#000;transform:scaleX(1.0500);">Craig</div>
<div class="t" style="left:239.50px;top:378.00px;font-size:11px;color:#000;transform:scaleX(1.0500);">Pastolove</div>
<div class="t" style="left:319.50px;top:378.00px;font-size:11px;color:#000;transform:scaleX(1.0500);">Family Doctor</div>
<div class="t" style="left:495.81px;top:378.00px;font-size:11px;color:#000;">585-723-3360</div>
<div class="t" style="left:595.31px;top:378.00px;font-size:11px;color:#000;">646-218-9857</div>
<div class="t" style="left:696.81px;top:378.00px;font-size:11px;color:#000;">201-839-5914</div>
<div class="t" style="left:780.50px;top:378.00px;font-size:11px;color:#000;transform:scaleX(1.1000);">Craig.Pastolove@morganstanley.com</div>
<div class="t" style="left:86.50px;top:395.00px;font-size:11px;color:#000;transform:scaleX(1.0500);">Health</div>
<div class="t" style="left:157.50px;top:395.00px;font-size:11px;color:#000;transform:scaleX(1.0500);">Geri</div>
<div class="t" style="left:239.50px;top:395.00px;font-size:11px;color:#000;transform:scaleX(1.0500);">Pell</div>
<div class="t" style="left:319.50px;top:395.00px;font-size:11px;color:#000;transform:scaleX(1.0500);">Veterinary</div>
<div class="t" style="left:495.81px;top:395.00px;font-size:11px;color:#000;">585-743-7047</div>
<div class="t" style="left:595.31px;top:395.00px;font-size:11px;color:#000;">212-686-5566</div>
<div class="t" style="left:696.81px;top:395.00px;font-size:11px;color:#000;">646-714-1779</div>
<div class="t" style="left:780.50px;top:395.00px;font-size:11px;color:#000;transform:scaleX(1.1000);">geri.e.pell@ampf.com</div>
<div class="t" style="left:86.50px;top:412.00px;font-size:11px;color:#000;transform:scaleX(1.0500);">Family</div>
<div class="t" style="left:157.50px;top:412.00px;font-size:11px;color:#000;transform:scaleX(1.0500);">Richard</div>
<div class="t" style="left:239.50px;top:412.00px;font-size:11px;color:#000;transform:scaleX(1.0500);">Salvino</div>
<div class="t" style="left:319.50px;top:412.00px;font-size:11px;color:#000;transform:scaleX(1.0500);">Wife</div>
<div class="t" style="left:495.81px;top:412.00px;font-size:11px;color:#000;">585-563-4776</div>
<div class="t" style="left:595.31px;top:412.00px;font-size:11px;color:#000;">917-338-0645</div>
<div class="t" style="left:696.81px;top:412.00px;font-size:11px;color:#000;">201-435-2874</div>
<div class="t" style="left:780.50px;top:412.00px;font-size:11px;color:#000;transform:scaleX(1.1000);">richard_salvino@ml.com</div>
<div class="t" style="left:997.50px;top:412.00px;font-size:11px;color:#000;transform:scaleX(1.0300);">@R_Salvino</div>
<div class="t" style="left:86.50px;top:429.00px;font-size:11px;color:#000;transform:scaleX(1.0500);">Family</div>
<div class="t" style="left:157.50px;top:429.00px;font-size:11px;color:#000;transform:scaleX(1.0500);">Frank</div>
<div class="t" style="left:239.50px;top:429.00px;font-size:11px;color:#000;transform:scaleX(1.0500);">Sabia</div>
<div class="t" style="left:319.50px;top:429.00px;font-size:11px;color:#000;transform:scaleX(1.0500);">Sister</div>
<div class="t" style="left:495.81px;top:429.00px;font-size:11px;color:#000;">914-255-0575</div>
<div class="t" style="left:595.31px;top:429.00px;font-size:11px;color:#000;">347-469-0378</div>
<div class="t" style="left:697.62px;top:429.00px;font-size:11px;color:#000;">732-349-0111</div>
<div class="t" style="left:780.50px;top:429.00px;font-size:11px;color:#000;transform:scaleX(1.1000);">Frank.J.Sabia@ubs.com</div>
<div class="t" style="left:997.50px;top:429.00px;font-size:11px;color:#000;transform:scaleX(1.0300);">@Sabia</div>
<div class="t" style="left:86.50px;top:446.00px;font-size:11px;color:#000;transform:scaleX(1.0500);">Family</div>
<div class="t" style="left:157.50px;top:446.00px;font-size:11px;color:#000;transform:scaleX(1.0500);">Michael</div>
<div class="t" style="left:239.50px;top:446.00px;font-size:11px;color:#000;transform:scaleX(1.0500);">Bapis</div>
<div class="t" style="left:319.50px;top:446.00px;font-size:11px;color:#000;transform:scaleX(1.0500);">Brother</div>
<div class="t" style="left:495.81px;top:446.00px;font-size:11px;color:#000;">212-673-8400</div>
<div class="t" style="left:595.31px;top:446.00px;font-size:11px;color:#000;">212-704-4343</div>
<div class="t" style="left:696.81px;top:446.00px;font-size:11px;color:#000;">732-662-2299</div>
<div class="t" style="left:780.50px;top:446.00px;font-size:11px;color:#000;transform:scaleX(1.1000);">mbapis@hightoweradvisors.com</div>
<div class="t" style="left:997.50px;top:446.00px;font-size:11px;color:#000;transform:scaleX(1.0300);">@MBapis</div>
<div class="r" style="left:0px;top:679px;width:1344px;height:1px;background:#ababab"></div>
<div class="r" style="left:0px;top:680px;width:1365px;height:20px;background:#f8f8f8"></div>
<div class="t" style="left:7.50px;top:685.00px;font-size:11.5px;color:#444;transform:scaleX(0.9107);">Ready</div>
<div class="r" style="left:1080px;top:680px;width:38px;height:20px;background:#c6c6c6"></div>
<svg class="s" style="left:1091px;top:683px;" width="15" height="14" viewBox="0 0 15 14"><g fill="none" stroke="#777" stroke-width="1.2"><rect x="1" y="1" width="12.5" height="11.5"/><path d="M5.2,1 V12.5 M9.4,1 V12.5 M1,4.8 H13.5 M1,8.7 H13.5"/></g></svg>
<svg class="s" style="left:0px;top:0px;" width="1365" height="700" viewBox="0 0 1365 700"><g fill="none" stroke="#6f6f6f" stroke-width="0.9">
      <rect x="1130.6" y="683.6" width="12.8" height="11.6"/><rect x="1133.6" y="685.5" width="6.9" height="7.8"/>
      <path d="M1135,687.4 H1139.1 M1135,689.4 H1139.1 M1135,691.4 H1139.1"/>
      <rect x="1168.5" y="683.6" width="12.8" height="11.6"/><path d="M1168.5,690.5 H1176.7 V683.6 M1172.6,683.6 V690.5"/></g></svg>
<div class="r" style="left:1199px;top:688.5px;width:6px;height:2px;background:#555"></div>
<div class="r" style="left:1209px;top:689px;width:100px;height:1px;background:#9a9a9a"></div>
<div class="r" style="left:1249px;top:684px;width:4px;height:11px;background:#666"></div>
<div class="r" style="left:1259px;top:686px;width:1px;height:5px;background:#9a9a9a"></div>
<svg class="s" style="left:1313px;top:685px;" width="9" height="9" viewBox="0 0 9 9"><path d="M4.5,0 V9 M0,4.5 H9" stroke="#555" stroke-width="2"/></svg>
<div class="t" style="left:1335.80px;top:685.00px;font-size:12px;color:#444;transform:scaleX(0.8626);">%85</div>
</body></html>
